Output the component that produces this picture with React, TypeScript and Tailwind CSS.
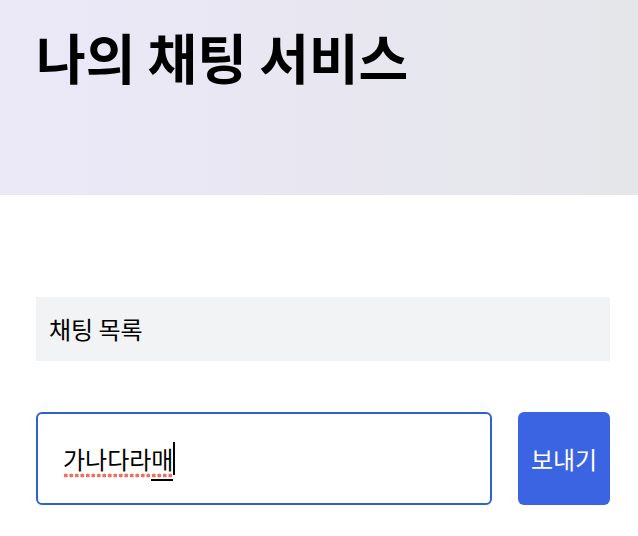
import React from "react";

const font = { fontFamily: '"Noto Sans CJK KR", "Noto Sans", sans-serif' };

const App: React.FC = () => {
  return (
    <div className="w-[638px] h-[536px] bg-white text-black" style={font}>
      <header className="h-[195px] bg-gradient-to-r from-[#ebe8f8] to-[#e5e6ea] pl-9 pr-7 pt-[30px]">
        <h1 className="text-[54px] font-bold leading-none">나의 채팅 서비스</h1>
      </header>

      <main className="pl-9 pr-7">
        <section className="mt-[102px] h-16 bg-[#f2f3f5] flex items-center px-[13px]">
          <h2 className="text-[24px] leading-none">채팅 목록</h2>
        </section>

        <form className="mt-[51px] flex gap-[26px] h-[93px]">
          <div className="flex-1 border-2 border-[#2f62d0] rounded-[6px] flex items-center pl-[25px]">
            <span className="text-[24px] leading-none flex items-center">
              <span className="relative">
                가나다라
                <span className="relative">
                  매
                  <span className="absolute left-0 right-0 -bottom-[5px] h-[2px] bg-black" />
                </span>
                <span className="absolute left-0 right-0 -bottom-[7px] h-[5px] bg-[radial-gradient(circle_at_center,#f26f63_1.8px,transparent_2.2px)] bg-[length:5.5px_5px]" />
              </span>
              <span className="inline-block w-[2px] h-[33px] bg-black" />
            </span>
          </div>
          <button
            type="submit"
            className="w-[92px] bg-[#3a64e2] rounded-[6px] text-white text-[24px] leading-none"
          >
            보내기
          </button>
        </form>
      </main>
    </div>
  );
};

export default App;
